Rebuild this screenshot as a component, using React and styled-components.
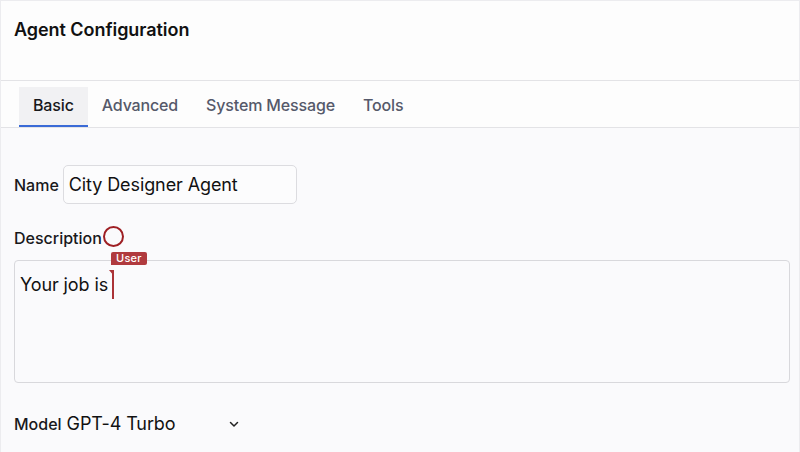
import React from 'react'
import styled, { createGlobalStyle } from 'styled-components'

const Global = createGlobalStyle`
  html, body {
    margin: 0;
    padding: 0;
    background: #fafafc;
  }
  body {
    font-family: "Inter", "Liberation Sans", sans-serif;
    color: #18181b;
  }
`

const Page = styled.div`
  width: 800px;
  height: 452px;
  box-sizing: border-box;
  border-top: 1px solid #ececef;
  border-left: 1px solid #ececef;
  border-right: 1px solid #ececef;
  overflow: hidden;
  background: #fafafc;
`

const Header = styled.div`
  height: 80px;
  box-sizing: border-box;
  padding: 18px 13px 0;
  border-bottom: 1px solid #e3e3e6;
  background: #fdfdfd;
`

const Title = styled.h1`
  margin: 0;
  font-size: 18px;
  font-weight: 600;
  letter-spacing: -0.05px;
  color: #111;
`

const TabBar = styled.div`
  display: flex;
  align-items: stretch;
  height: 47px;
  box-sizing: border-box;
  padding: 6px 0 0 18px;
  border-bottom: 1px solid #e3e3e6;
  background: #fdfdfd;
`

const Tab = styled.div`
  display: flex;
  align-items: center;
  padding: 0 14px 2px;
  font-size: 16px;
  font-weight: 500;
  letter-spacing: -0.15px;
  color: ${p => (p.$active ? '#18181b' : '#55596a')};
  background: ${p => (p.$active ? '#f1f1f3' : 'transparent')};
  border-bottom: 2px solid ${p => (p.$active ? '#3a6ad6' : 'transparent')};
`

const Body = styled.div`
  padding: 37px 10px 0 13px;
`

const Row = styled.div`
  display: flex;
  align-items: center;
`

const Label = styled.span`
  font-size: 16px;
  font-weight: 500;
  color: #18181b;
`

const NameInput = styled.div`
  margin-left: 4px;
  width: 234px;
  height: 39px;
  box-sizing: border-box;
  border: 1px solid #dcdce0;
  border-radius: 5px;
  background: #fcfcfd;
  padding: 0 5px;
  display: flex;
  align-items: center;
  font-size: 18px;
  letter-spacing: -0.1px;
  color: #111;
`

const DescRow = styled(Row)`
  margin-top: 23px;
  height: 22px;
`

const Presence = styled.span`
  display: inline-block;
  width: 17px;
  height: 17px;
  border: 2px solid #9e1f24;
  border-radius: 50%;
  margin-left: 1px;
  margin-top: -3px;
`

const TextArea = styled.div`
  position: relative;
  margin-top: 11px;
  width: 776px;
  height: 123px;
  box-sizing: border-box;
  border: 1px solid #d8d8dc;
  border-radius: 4px;
  background: #fafafc;
  padding: 9px 5px;
  font-size: 18px;
  letter-spacing: -0.1px;
  color: #111;
  line-height: 22px;
`

const Caret = styled.span`
  position: relative;
  display: inline-block;
  width: 2px;
  height: 29px;
  background: #ab3337;
  vertical-align: -8px;
  margin-left: 4px;

  &::after {
    content: '';
    position: absolute;
    top: 0;
    left: -3px;
    border-top: 6px solid #ab3337;
    border-left: 5px solid transparent;
  }
`

const Badge = styled.span`
  position: absolute;
  left: -1px;
  top: -18px;
  height: 13px;
  padding: 0 5px;
  background: #b03a3e;
  color: #fff;
  font-size: 11px;
  line-height: 13px;
  font-weight: 500;
  border-radius: 2px 2px 2px 0;
  white-space: nowrap;
  letter-spacing: 0.2px;
`

const ModelRow = styled(Row)`
  margin-top: 30px;
`

const ModelValue = styled.span`
  margin-left: 5px;
  font-size: 18px;
  letter-spacing: -0.1px;
  color: #111;
  width: 161px;
`

const Chevron = () => (
  <svg width="12" height="12" viewBox="0 0 12 12" fill="none">
    <path d="M2.5 4.5 L6 8 L9.5 4.5" stroke="#222" strokeWidth="1.5" strokeLinecap="round" strokeLinejoin="round" />
  </svg>
)

export default function App() {
  return (
    <Page>
      <Global />
      <Header>
        <Title>Agent Configuration</Title>
      </Header>
      <TabBar>
        <Tab $active>Basic</Tab>
        <Tab>Advanced</Tab>
        <Tab>System Message</Tab>
        <Tab>Tools</Tab>
      </TabBar>
      <Body>
        <Row>
          <Label>Name</Label>
          <NameInput>City Designer Agent</NameInput>
        </Row>
        <DescRow>
          <Label>Description</Label>
          <Presence />
        </DescRow>
        <TextArea>
          Your job is
          <Caret>
            <Badge>User</Badge>
          </Caret>
        </TextArea>
        <ModelRow>
          <Label>Model</Label>
          <ModelValue>GPT-4 Turbo</ModelValue>
          <Chevron />
        </ModelRow>
      </Body>
    </Page>
  )
}
